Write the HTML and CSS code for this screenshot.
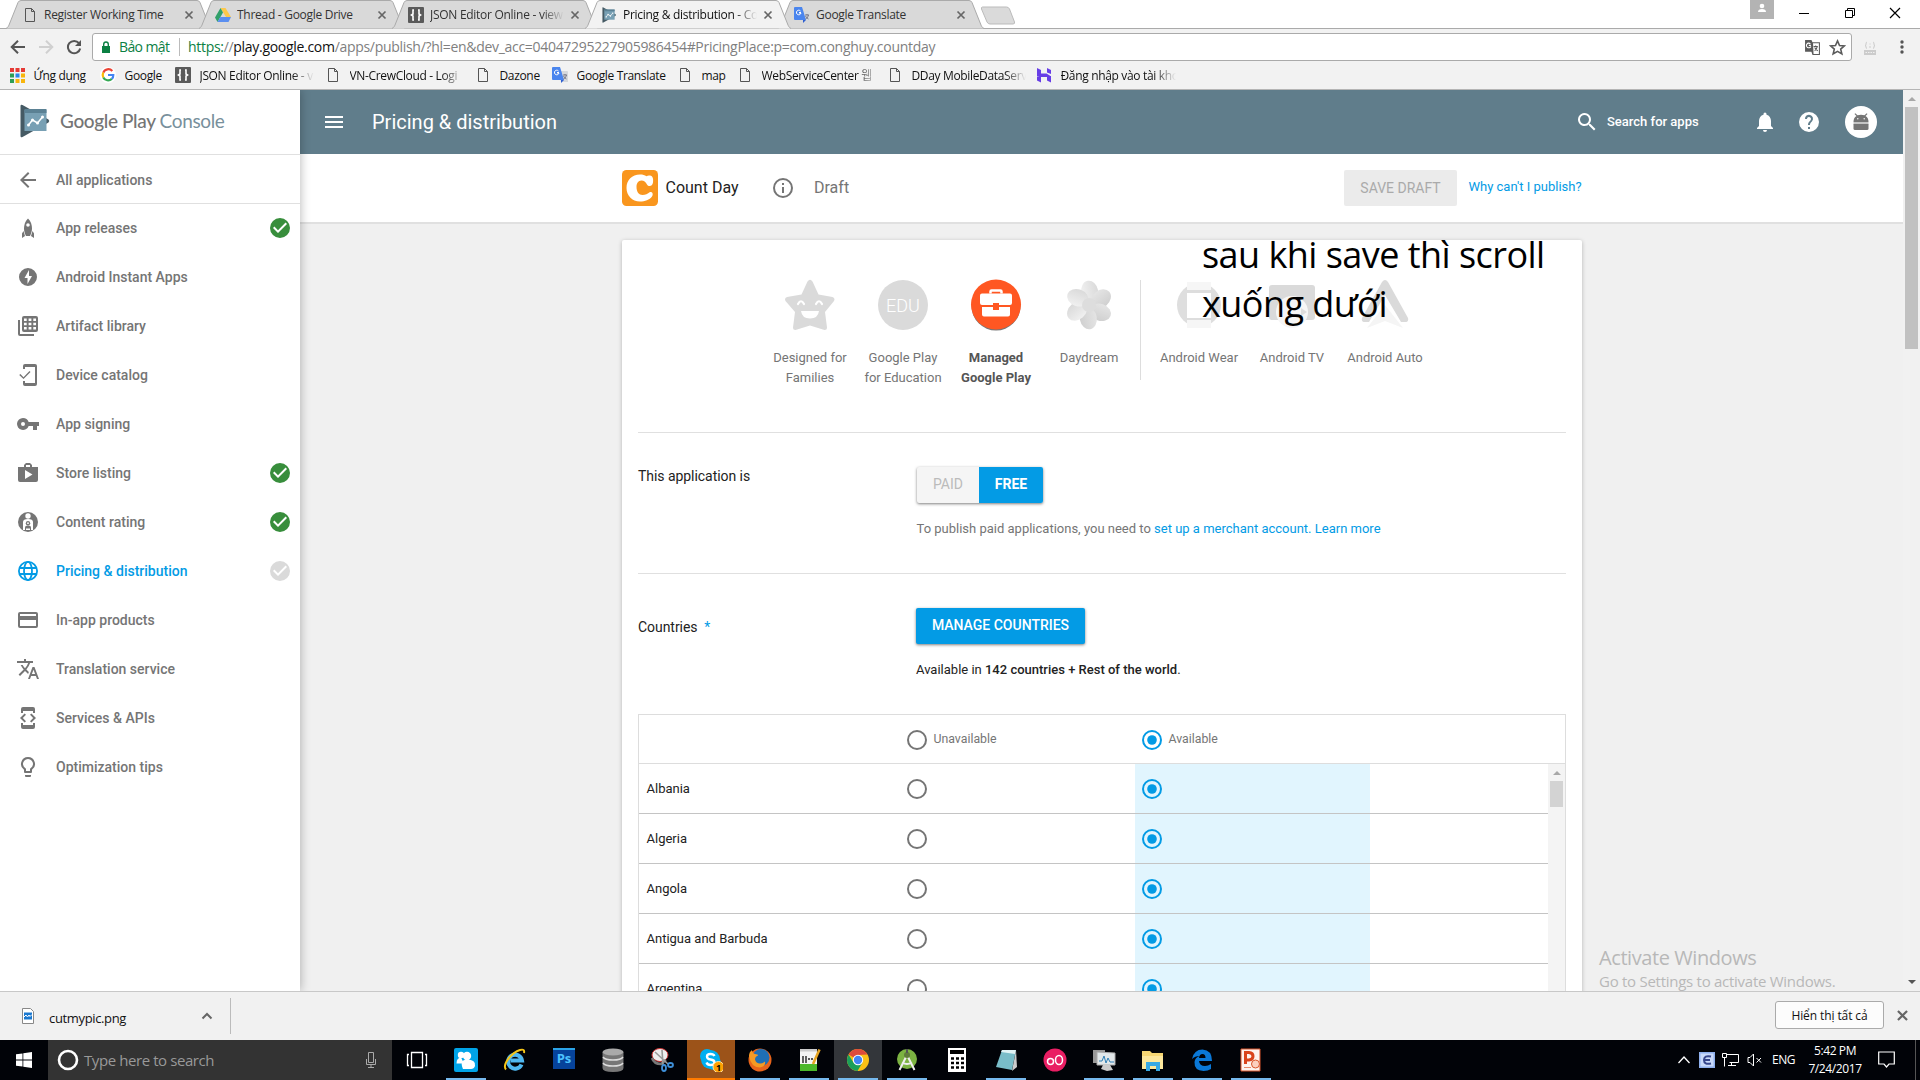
FILE: index.html
```html
<!DOCTYPE html>
<html lang="en">
<head>
<meta charset="utf-8">
<title>Pricing &amp; distribution - Google Play Console</title>
<link rel="stylesheet" href="styles.css">
</head>
<body>
<svg class="defs" aria-hidden="true">
  <symbol id="tab" viewBox="0 0 206 29"><path d="M0 28.5 C2 27.500 2.500 26 3 25 L12 2.500 Q13 .5 15 .5 H191 Q193 .5 194 2.500 L203 25 C203.500 26 204 27.500 206 28.500"/></symbol>
  <symbol id="doc" viewBox="0 0 16 16"><path d="M3.500 1.500h6l3 3v10h-9zM9.500 1.500v3h3" fill="none" stroke="#555"/></symbol>
  <symbol id="x" viewBox="0 0 10 10"><path d="M1.500 1.500l7 7M8.500 1.500l-7 7" stroke="#666" stroke-width="1.700"/></symbol>
  <symbol id="json" viewBox="0 0 16 16"><rect width="16" height="16" rx="1" fill="#5a5a5a"/><path d="M6 3H5v4L3.500 8 5 9v4h1M10 3h1v4l1.500 1L11 9v4h-1" fill="none" stroke="#fff" stroke-width="1.600"/></symbol>
  <symbol id="trans" viewBox="0 0 16 16"><path d="M6 4h9a1 1 0 0 1 1 1v10H9z" fill="#d5d8dc"/><path d="M1 0h7l4 13H1a1 1 0 0 1-1-1V1a1 1 0 0 1 1-1z" fill="#4a85ee"/><path d="M9 13h3l-3 3z" fill="#2f5fd0"/><path d="M7 5.500H5M6.500 4A2.300 2.300 0 1 0 7 6H5" fill="none" stroke="#fff"/><path d="M11 8h4M13 7v1m1.500 0q-.5 3-3 4m0-3q1 2 3 3" fill="none" stroke="#667" stroke-width=".8"/></symbol>
  <symbol id="check" viewBox="0 0 24 24"><path d="M12 2a10 10 0 1 0 0 20 10 10 0 0 0 0-20zm-2 15-5-5 1.410-1.410L10 14.170l7.590-7.590L19 8z"/></symbol>
  <symbol id="off" viewBox="0 0 24 24"><path d="M12 2a10 10 0 1 0 0 20 10 10 0 0 0 0-20zm0 18a8 8 0 1 1 0-16 8 8 0 0 1 0 16z" fill="#757575"/></symbol>
  <symbol id="on" viewBox="0 0 24 24"><path d="M12 2a10 10 0 1 0 0 20 10 10 0 0 0 0-20zm0 18a8 8 0 1 1 0-16 8 8 0 0 1 0 16z" fill="#039be5"/><circle cx="12" cy="12" r="4.800" fill="#039be5"/></symbol>
  <symbol id="play" viewBox="0 0 30 34"><path d="M1 2Q1 0 3 1L29 15.500q1.500 1.500 0 3L3 33q-2 1-2-1z" fill="#455a64"/><path d="M5 6h22v21H5z" fill="#78a0b4"/><path d="M5 5h22v4H5z" fill="#5b8194"/><path d="M9 21l4-5 5 3 5-6" fill="none" stroke="#fff" stroke-width="1.500"/><g fill="#fff"><circle cx="9" cy="21" r="1.500"/><circle cx="13" cy="16" r="1.500"/><circle cx="18" cy="19" r="1.500"/><circle cx="23" cy="13" r="1.500"/></g></symbol>
</svg>

<header class="tabs">
  <div class="tab"><svg class="shape"><use href="#tab"/></svg><div class="in"><svg class="fav"><use href="#doc"/></svg><span class="t">Register Working Time</span><svg class="cl"><use href="#x"/></svg></div></div>
  <div class="tab"><svg class="shape"><use href="#tab"/></svg><div class="in"><svg class="fav" viewBox="0 0 16 16"><path d="M5.500 1h5l5.500 9h-5z" fill="#fdc84b"/><path d="M5.500 1 0 10.500 2.500 15 8 5.500z" fill="#31a06a"/><path d="M5.300 10H16l-2.500 5h-11z" fill="#5b8ff0"/></svg><span class="t">Thread - Google Drive</span><svg class="cl"><use href="#x"/></svg></div></div>
  <div class="tab"><svg class="shape"><use href="#tab"/></svg><div class="in"><svg class="fav"><use href="#json"/></svg><span class="t fade">JSON Editor Online - view</span><svg class="cl"><use href="#x"/></svg></div></div>
  <div class="tab active"><svg class="shape"><use href="#tab"/></svg><div class="in"><svg class="fav"><use href="#play"/></svg><span class="t fade">Pricing &amp; distribution - Co</span><svg class="cl"><use href="#x"/></svg></div></div>
  <div class="tab"><svg class="shape"><use href="#tab"/></svg><div class="in"><svg class="fav"><use href="#trans"/></svg><span class="t">Google Translate</span><svg class="cl"><use href="#x"/></svg></div></div>
  <svg class="newtab" viewBox="0 0 36 19"><path d="M2.500 1h24q2 0 3 2l5 13q.5 2-1.500 2H10q-2 0-3-2L1.500 3q-.5-2 1-2z" fill="#dadada" stroke="#bbb"/></svg>
  <div class="winctl">
    <svg class="user" viewBox="0 0 24 19"><path d="M0 0h24v19H0z" fill="#b3b3b3"/><circle cx="12" cy="6" r="2.300" fill="#fff"/><path d="M8 12q0-3 4-3t4 3z" fill="#fff"/></svg>
    <svg class="wc" viewBox="0 0 12 12"><path d="M1 6.500h10" stroke="#000"/></svg>
    <svg class="wc" viewBox="0 0 12 12"><path d="M1.500 3.500h7v7h-7zM3.500 3.500v-2h7v7h-2" fill="none" stroke="#000"/></svg>
    <svg class="wc" viewBox="0 0 12 12"><path d="M1 1l10 10M11 1 1 11" stroke="#000" stroke-width="1.200"/></svg>
  </div>
</header>

<div class="toolbar">
  <svg class="nav" viewBox="0 0 16 16"><path d="M15 8H2M8 1.700 1.700 8 8 14.300" fill="none" stroke="#555" stroke-width="2"/></svg>
  <svg class="nav" viewBox="0 0 16 16"><path d="M1 8h13M8 1.700 14.300 8 8 14.300" fill="none" stroke="#d0d0d0" stroke-width="2"/></svg>
  <svg class="nav" viewBox="0 0 16 16"><path d="M13 4.200A6.200 6.200 0 1 0 14.200 9.500" fill="none" stroke="#555" stroke-width="2"/><path d="M15 1v6H9z" fill="#555"/></svg>
  <div class="omni">
    <svg class="lock" viewBox="0 0 10 13"><path d="M1 5h8v7H1z" fill="#0b8043"/><path d="M2.700 5V3.300a2.300 2.300 0 0 1 4.600 0V5" fill="none" stroke="#0b8043" stroke-width="1.400"/></svg>
    <span class="secure">Bảo mật</span>
    <span class="url"><i>https:</i>//<b>play.google.com</b>/apps/publish/?hl=en&amp;dev_acc=04047295227905986454#PricingPlace:p=com.conghuy.countday</span>
    <svg class="oi" viewBox="0 0 16 16"><path d="M1 1h6l1 2h7v12H8l-1-3H1z" fill="#5a5a5a"/><path d="M8.500 4H14v10H9z" fill="#fff"/><path d="M6.500 6H4.500M6 4.500A2.200 2.200 0 1 0 6.500 7" fill="none" stroke="#fff"/><path d="M9 7h4M11 6v1m1.500 0q-.5 3-2.500 4m0-3q1 2 3 3" fill="none" stroke="#5a5a5a"/></svg>
    <svg class="oi" viewBox="0 0 16 16"><path d="M8 1.800l1.900 4.300 4.600.4-3.500 3 1.100 4.600L8 11.700l-4.100 2.400L5 9.500l-3.500-3 4.600-.4z" fill="none" stroke="#5a5a5a" stroke-width="1.500"/></svg>
  </div>
  <svg class="ext" viewBox="0 0 14 16"><path d="M1 11h12v5H1z" fill="#ccc"/><path d="M4 3Q3 3 3 5T2 6.500Q3 6.500 3 8t1 1.500M10 3q1 0 1 2t1 1.500Q11 6.500 11 8t-1 1.500M7 4.500v1M7 7v2" fill="none" stroke="#ccc"/><path d="M2.500 13.500h9" stroke="#f1f1f1" stroke-dasharray="1.500 1"/></svg>
  <svg class="dots" viewBox="0 0 4 16"><g fill="#555"><circle cx="2" cy="3" r="1.700"/><circle cx="2" cy="8" r="1.700"/><circle cx="2" cy="13" r="1.700"/></g></svg>
</div>

<nav class="marks">
  <a style="width:91px"><svg viewBox="0 0 16 16"><path d="M1 1h4v4H1zM6.500 1h4v4h-4zM12 1h4v4h-4z" fill="#e53a35"/><path d="M1 6.500h4v4H1z" fill="#2e9e55"/><path d="M6.500 6.500h4v4h-4z" fill="#2c87e8"/><path d="M12 6.500h4v4h-4zM6.500 12h4v4h-4zM12 12h4v4h-4z" fill="#f8b50c"/><path d="M1 12h4v4H1z" fill="#2e9e55"/></svg><span>Ứng dụng</span></a>
  <a style="width:75px"><svg viewBox="0 0 16 16"><circle cx="8" cy="8" r="8" fill="#fff"/><path d="M12.300 4A5.400 5.400 0 0 0 3.300 5.600" fill="none" stroke="#ea4335" stroke-width="2.200"/><path d="M3.300 5.600a5.400 5.400 0 0 0 0 4.800" fill="none" stroke="#fbbc05" stroke-width="2.200"/><path d="M3.300 10.400a5.400 5.400 0 0 0 8.500 1.500" fill="none" stroke="#34a853" stroke-width="2.200"/><path d="M11.800 11.900A5.400 5.400 0 0 0 13.300 8H8" fill="none" stroke="#4285f4" stroke-width="2.200"/></svg><span>Google</span></a>
  <a style="width:150px"><svg><use href="#json"/></svg><span class="fade" style="width:114px">JSON Editor Online - v</span></a>
  <a style="width:150px"><svg><use href="#doc"/></svg><span class="fade" style="width:114px">VN-CrewCloud - Logi</span></a>
  <a style="width:77px"><svg><use href="#doc"/></svg><span>Dazone</span></a>
  <a style="width:125px"><svg><use href="#trans"/></svg><span>Google Translate</span></a>
  <a style="width:60px"><svg><use href="#doc"/></svg><span>map</span></a>
  <a style="width:150px"><svg><use href="#doc"/></svg><span class="fade" style="width:116px">WebServiceCenter 웹</span></a>
  <a style="width:149px"><svg><use href="#doc"/></svg><span class="fade" style="width:114px">DDay MobileDataServ</span></a>
  <a style="width:150px"><svg viewBox="0 0 16 16"><path d="M1 1l4 2v3.500h5.500l4 2.500H1zM11 1l4 2v4l-4-1.500zM15 15.500l-4-2V10H5.500l-4-1H15zM1 9.500h4v6l-4-2z" fill="#673de6"/></svg><span class="fade" style="width:115px">Đăng nhập vào tài kho</span></a>
</nav>

<main class="page">
  <aside class="side">
    <div class="logo"><svg><use href="#play"/></svg><span>Google Play <em>Console</em></span></div>
    <a class="row back"><svg viewBox="0 0 24 24"><path d="M20 11H7.830l5.590-5.590L12 4l-8 8 8 8 1.410-1.410L7.830 13H20z"/></svg><span>All applications</span></a>
    <a class="row"><svg viewBox="0 0 24 24"><path d="M12 2.500C9 5.500 8 9 8 12.500c0 2.800.8 5 2 7.500h4c1.200-2.500 2-4.700 2-7.500 0-3.500-1-7-4-10zm0 4.700a1.800 1.800 0 1 1 0 3.600 1.800 1.800 0 0 1 0-3.600zM7.500 15 6 17.500V22l3-2zM16.500 15l1.500 2.500V22l-3-2z"/></svg><span>App releases</span><svg class="ok"><use href="#check"/></svg></a>
    <a class="row"><svg viewBox="0 0 24 24"><path d="M12 3a9 9 0 1 0 0 18 9 9 0 0 0 0-18zm-.500 16v-6H8.500L13 5v6h3z"/></svg><span>Android Instant Apps</span></a>
    <a class="row"><svg viewBox="0 0 24 24"><path fill-rule="evenodd" d="M8 2h12a2 2 0 0 1 2 2v12a2 2 0 0 1-2 2H8a2 2 0 0 1-2-2V4a2 2 0 0 1 2-2zm0 2.500V7h2.700V4.500zm4.600 0V7h2.800V4.500zm4.700 0V7H20V4.500zM8 8.700v2.600h2.700V8.700zm4.600 0v2.600h2.800V8.700zm4.700 0v2.600H20V8.700zM8 13v2.500h2.700V13zm4.600 0v2.500h2.800V13zm4.700 0v2.500H20V13z"/><path d="M2 6h2v14h14v2H4a2 2 0 0 1-2-2z"/></svg><span>Artifact library</span></a>
    <a class="row"><svg viewBox="0 0 24 24"><path d="M9 1h10a2 2 0 0 1 2 2v18a2 2 0 0 1-2 2H9a2 2 0 0 1-2-2v-3h2v2h10V4H9v2H7V3a2 2 0 0 1 2-2z"/><path d="M4.400 11 7.500 14.200 13.500 8l1 1-7 7-4.300-4z"/></svg><span>Device catalog</span></a>
    <a class="row"><svg viewBox="0 0 24 24"><path d="M12.650 10A5.990 5.990 0 0 0 7 6a6 6 0 1 0 5.650 8H17v4h4v-4h2v-4zM7 14a2 2 0 1 1 0-4 2 2 0 0 1 0 4z"/></svg><span>App signing</span></a>
    <a class="row"><svg viewBox="0 0 24 24"><path d="M16 6V4l-2-2h-4L8 4v2H2v13a2 2 0 0 0 2 2h16a2 2 0 0 0 2-2V6zm-6-2h4v2h-4zM9 18V9l7.500 4.500z"/></svg><span>Store listing</span><svg class="ok"><use href="#check"/></svg></a>
    <a class="row"><svg viewBox="0 0 24 24"><circle cx="12" cy="12" r="10"/><circle cx="12" cy="6" r="2.700" fill="#fff"/><path d="M7 20v-8q0-3 5-3t5 3v8z" fill="#fff"/><circle cx="12" cy="13.200" r="2.200"/><path d="M9 20v-2.500q0-2 3-2t3 2V20z"/><circle cx="12" cy="13.200" r=".9" fill="#fff"/><path d="M10 20h4v-1.500h-4z" fill="#fff"/></svg><span>Content rating</span><svg class="ok"><use href="#check"/></svg></a>
    <a class="row cur"><svg viewBox="0 0 24 24"><g fill="none" stroke="#039be5" stroke-width="1.800"><circle cx="12" cy="12" r="9.100"/><ellipse cx="12" cy="12" rx="4" ry="9.100"/><path d="M3.500 9h17M3.500 15h17"/></g></svg><span>Pricing &amp; distribution</span><svg class="ok no"><use href="#check"/></svg></a>
    <a class="row"><svg viewBox="0 0 24 24"><path d="M20 4H4a2 2 0 0 0-2 2v12a2 2 0 0 0 2 2h16a2 2 0 0 0 2-2V6a2 2 0 0 0-2-2zm0 14H4v-6h16zm0-10H4V6h16z"/></svg><span>In-app products</span></a>
    <a class="row"><svg viewBox="0 0 24 24"><path d="M12.870 15.070l-2.540-2.510.03-.03A17.520 17.520 0 0 0 14.070 6H17V4h-7V2H8v2H1v1.990h11.170C11.500 7.920 10.440 9.750 9 11.350 8.070 10.320 7.300 9.190 6.690 8h-2c.73 1.630 1.730 3.170 2.980 4.560l-5.090 5.020L4 19l5-5 3.110 3.110zM18.500 10h-2L12 22h2l1.120-3h4.750L21 22h2zm-2.620 7l1.620-4.330L19.120 17z"/></svg><span>Translation service</span></a>
    <a class="row"><svg viewBox="0 0 24 24"><path d="M7 5h10v2h2V3a2 2 0 0 0-2-2H7a2 2 0 0 0-2 2v4h2zm8.410 11.590L20 12l-4.590-4.590L14 8.830 17.170 12 14 15.170zM10 15.170 6.830 12 10 8.830 8.590 7.410 4 12l4.590 4.590zM17 19H7v-2H5v4a2 2 0 0 0 2 2h10a2 2 0 0 0 2-2v-4h-2z"/></svg><span>Services &amp; APIs</span></a>
    <a class="row"><svg viewBox="0 0 24 24"><path d="M9 21a1 1 0 0 0 1 1h4a1 1 0 0 0 1-1v-1H9zm3-19a7 7 0 0 0-4 12.740V17a1 1 0 0 0 1 1h6a1 1 0 0 0 1-1v-2.260A7 7 0 0 0 12 2zm2.850 11.100-.85.600V16h-4v-2.300l-.85-.600a5 5 0 1 1 5.700 0z"/></svg><span>Optimization tips</span></a>
  </aside>

  <section class="body">
    <div class="appbar">
      <svg class="ham" viewBox="0 0 24 24"><path d="M3 18h18v-2H3zm0-5h18v-2H3zm0-7v2h18V6z"/></svg>
      <h1>Pricing &amp; distribution</h1>
      <svg class="mag" viewBox="0 0 24 24"><path d="M15.500 14h-.79l-.28-.27A6.500 6.500 0 1 0 13.730 14.430l.27.280v.79l5 4.990L20.490 19zm-6 0a4.500 4.500 0 1 1 0-9 4.500 4.500 0 0 1 0 9z"/></svg>
      <span class="sfa">Search for apps</span>
      <svg class="bell" viewBox="0 0 24 24"><path d="M12 22a2 2 0 0 0 2-2h-4a2 2 0 0 0 2 2zm6-6v-5c0-3.070-1.640-5.640-4.500-6.320V4a1.500 1.500 0 0 0-3 0v.68C7.630 5.360 6 7.920 6 11v5l-2 2v1h16v-1z"/></svg>
      <svg class="help" viewBox="0 0 24 24"><path d="M12 2a10 10 0 1 0 0 20 10 10 0 0 0 0-20zm1 17h-2v-2h2zm2.070-7.750-.9.920C13.450 12.900 13 13.500 13 15h-2v-.5c0-1.100.45-2.100 1.170-2.830l1.240-1.260A2 2 0 1 0 10 9H8a4 4 0 1 1 7.070 2.250z"/></svg>
      <svg class="ava" viewBox="0 0 32 32"><circle cx="16" cy="16" r="16" fill="#fff"/><path d="M8.500 16q0-4.500 3-6L9.500 8l.8-.8 2.200 2q3.500-1 7 0l2.200-2 .8.800-2 2q3 1.500 3 6z" fill="#757575"/><path d="M8.500 16h15v2.500h-15z" fill="#c4c4c4"/><path d="M8.500 18h15v4.500q0 1.500-1.500 1.500H10q-1.500 0-1.500-1.500z" fill="#757575"/><circle cx="12.800" cy="12.800" r=".7" fill="#fff"/><circle cx="19.200" cy="12.800" r=".7" fill="#fff"/></svg>
    </div>
    <div class="sub">
      <svg class="appicon" viewBox="0 0 36 36"><rect width="36" height="36" rx="4.500" fill="#f9961e"/><path d="M28 5.500C31 6 31.500 9 31 12.500 30.500 16.500 26.500 17 25 14.500 23.500 12 22 10.500 19.500 10.500 16 10.500 14.500 13.500 14.500 17 14.500 22 17 25 20.500 25 23.500 25 25.500 24 28 22 30.500 21.500 31.500 24 30 26.500 27.500 30 23 31.500 18 31.500 10 31.500 4.500 25.500 4.500 18 4.500 10 10 4.500 18 4.500 21 4.500 22.500 5 24.500 6.200 25.500 5.500 26.500 5.200 28 5.500z" fill="#fff"/></svg>
      <span class="name">Count Day</span>
      <svg class="info" viewBox="0 0 24 24"><path d="M11 17h2v-6h-2zm1-15a10 10 0 1 0 0 20 10 10 0 0 0 0-20zm0 18a8 8 0 1 1 0-16 8 8 0 0 1 0 16zM11 9h2V7h-2z"/></svg>
      <span class="draft">Draft</span>
      <button class="save">SAVE DRAFT</button>
      <a class="why">Why can't I publish?</a>
    </div>

    <div class="card">
      <div class="progs">
        <div class="p"><svg viewBox="0 0 52 52"><path d="M23.500 2.500q2.500-3.500 5 0l6 13 14 2.500q3 1 1.500 4L41 33l2 15.500q0 2.500-2.500 2.500L26 46.500 11.500 51Q9 51 9 48.500L11 33 1.500 22q-1.500-3 1.500-4l14.500-2.500z" fill="#dadada"/><path d="M14 25q3-5.500 6 0M32 25q3-5.500 6 0" fill="none" stroke="#fff" stroke-width="2.200" stroke-linecap="round"/><path d="M17 32h18q-1 7.500-9 7.500T17 32z" fill="#fff"/></svg><span>Designed for<br>Families</span></div>
        <div class="p"><svg viewBox="0 0 52 52"><circle cx="26" cy="26" r="25" fill="#dadada"/><text x="26" y="32.500" text-anchor="middle" class="edu">EDU</text></svg><span>Google Play<br>for Education</span></div>
        <div class="p sel"><svg viewBox="0 0 52 52"><circle cx="26" cy="27" r="24.500" fill="#777"/><circle cx="26" cy="25.500" r="25" fill="#ff5722"/><path d="M20.500 14.500v-2q0-1 1-1h9q1 0 1 1v2" fill="none" stroke="#fff" stroke-width="2.500"/><path d="M12 14.500h28q2 0 2 2V24q0 2-2 2H12q-2 0-2-2v-7.500q0-2 2-2zM12 28h28v7.500q0 2-2 2H14q-2 0-2-2z" fill="#fff"/><path d="M23 24h6v7h-6z" fill="#ff5722"/></svg><span>Managed<br>Google Play</span></div>
        <div class="p"><svg viewBox="0 0 52 52"><defs><linearGradient id="pl"><stop offset="0" stop-color="#f0f0f0"/><stop offset="1" stop-color="#dadada"/></linearGradient><linearGradient id="pd"><stop offset="0" stop-color="#e4e4e4"/><stop offset="1" stop-color="#d0d0d0"/></linearGradient></defs><g transform="translate(26 26)"><ellipse cx="3" cy="-13" rx="8.500" ry="11" transform="rotate(-10)" fill="url(#pl)"/><ellipse cx="3" cy="-13" rx="8.500" ry="11" transform="rotate(50)" fill="url(#pd)"/><ellipse cx="3" cy="-13" rx="8.500" ry="11" transform="rotate(110)" fill="url(#pd)"/><ellipse cx="3" cy="-13" rx="8.500" ry="11" transform="rotate(170)" fill="url(#pd)"/><ellipse cx="3" cy="-13" rx="8.500" ry="11" transform="rotate(230)" fill="url(#pl)"/><ellipse cx="3" cy="-13" rx="8.500" ry="11" transform="rotate(290)" fill="url(#pl)"/><circle r="7" fill="#ddd"/></g></svg><span>Daydream</span></div>
        <i class="vr"></i>
        <div class="p"><svg viewBox="0 0 52 52"><circle cx="26" cy="26" r="22" fill="#dedede"/><path d="M14 3h24v46H14z" fill="#f6f6f6"/><path d="M14 11h24v3H14zM14 39h24v2H14z" fill="#ddd"/><path d="M14 14h24v25H14z" fill="#fff"/></svg><span>Android Wear</span></div>
        <div class="p"><svg viewBox="0 0 52 52"><rect x="3" y="6" width="46" height="35" rx="3" fill="#dadada"/><circle cx="26" cy="33" r="16" fill="#f6f6f6"/><path d="M35 29l6 4-6 4z" fill="#ddd"/></svg><span>Android TV</span></div>
        <div class="p"><svg viewBox="0 0 52 52"><path d="M26 26 8 49l18-7 18 7z" fill="#f5f5f5"/><path d="M23 3q3-4 6 0l20 36q1 4-3 4h-4L26 16 10 43H6q-4 0-3-4z" fill="#dadada"/></svg><span>Android Auto</span></div>
      </div>

      <div class="sec s1">
        <label>This application is</label>
        <div>
          <div class="toggle"><span>PAID</span><b>FREE</b></div>
          <p class="hint">To publish paid applications, you need to <a>set up a merchant account.</a> <a>Learn more</a></p>
        </div>
      </div>
      <div class="sec s2">
        <label>Countries &nbsp;<a>*</a></label>
        <div>
          <button class="manage">MANAGE COUNTRIES</button>
          <p class="avail">Available in <b>142 countries + Rest of the world</b>.</p>
        </div>
      </div>

      <div class="table">
        <div class="tr th"><span></span><span class="o"><svg><use href="#off"/></svg>Unavailable</span><span class="o"><svg><use href="#on"/></svg>Available</span></div>
        <div class="scroll">
          <div class="rows">
            <div class="tr"><span>Albania</span><span class="o"><svg><use href="#off"/></svg></span><span class="o hl"><svg><use href="#on"/></svg></span></div>
            <div class="tr"><span>Algeria</span><span class="o"><svg><use href="#off"/></svg></span><span class="o hl"><svg><use href="#on"/></svg></span></div>
            <div class="tr"><span>Angola</span><span class="o"><svg><use href="#off"/></svg></span><span class="o hl"><svg><use href="#on"/></svg></span></div>
            <div class="tr"><span>Antigua and Barbuda</span><span class="o"><svg><use href="#off"/></svg></span><span class="o hl"><svg><use href="#on"/></svg></span></div>
            <div class="tr"><span>Argentina</span><span class="o"><svg><use href="#off"/></svg></span><span class="o hl"><svg><use href="#on"/></svg></span></div>
          </div>
          <div class="tsb"><i class="up"></i><i class="thumb"></i></div>
        </div>
      </div>
    </div>
  </section>
  <div class="vsb"><i class="up"></i><i class="thumb"></i><i class="down"></i></div>
</main>

<footer class="shelf">
  <svg class="file" viewBox="0 0 12 16"><path d="M.5.500h8l3 3v12H.500z" fill="#fff" stroke="#888"/><path d="M2 4.500h8v7H2z" fill="#1a78d0"/><path d="M2 9l2-2 1.500 2L7 7l1 1.500 2-2" fill="none" stroke="#fff"/></svg>
  <span class="fname">cutmypic.png</span>
  <svg class="chev" viewBox="0 0 12 8"><path d="M1.500 6.500 6 2l4.500 4.500" fill="none" stroke="#666" stroke-width="2"/></svg>
  <i class="sep"></i>
  <button class="all">Hiển thị tất cả</button>
  <svg class="sx"><use href="#x"/></svg>
</footer>

<footer class="task">
  <svg class="start" viewBox="0 0 16 16"><path d="M0 2.300 6.500 1.400v6.200H0zM7.300 1.300 16 0v7.600H7.300zM0 8.400h6.500v6.200L0 13.700zM7.300 8.400H16V16l-8.700-1.300z" fill="#fff"/></svg>
  <div class="find"><svg class="cort" viewBox="0 0 22 22"><circle cx="11" cy="11" r="9" fill="none" stroke="#fff" stroke-width="2.600"/></svg><span>Type here to search</span><svg class="mic" viewBox="0 0 12 18"><path d="M3.500 1.500h5v10h-5zM1.500 8v5.500h9V8M6 13.500v3M3 16.500h6" fill="none" stroke="#aaa"/></svg></div>
  <div class="apps">
    <div><svg viewBox="0 0 24 24"><path d="M6.500 4.500h11v15h-11zM4 6.500H2.500v11H4M20 6.500h1.500v11H20" fill="none" stroke="#fff" stroke-width="1.300"/></svg></div>
    <div class="run"><svg viewBox="0 0 24 24"><rect width="24" height="24" rx="2" fill="#00a4e8"/><g fill="#fff"><circle cx="7" cy="7" r="3.200"/><path d="M2.500 15.500Q2.500 10 7 9.500l3 6z"/><circle cx="13" cy="8" r="4.200"/><path d="M9 21q-4-9 4-9.500 9 0 8 6.500-1 3-4 3z"/></g></svg></div>
    <div><svg viewBox="0 0 24 24"><path d="M18.500 16.500A7 7 0 1 1 19 12.500H7.500" fill="none" stroke="#4fb8f0" stroke-width="4"/><path d="M3 21.500C-1 17 8 5 17 2q5-1.500 4 3" fill="none" stroke="#f5c518" stroke-width="2"/></svg></div>
    <div><svg viewBox="0 0 24 24"><path d="M1 1h22v20H1z" fill="#06439b"/><path d="M1 0h22v2H1z" fill="#2ba3e8"/><text x="12" y="15" text-anchor="middle" class="ps">Ps</text></svg></div>
    <div><svg viewBox="0 0 24 24"><g fill="#777"><path d="M1.500 4v16q0 4 10.500 4t10.500-4V4z"/></g><g fill="none" stroke="#ddd" stroke-width="1.500"><path d="M2 9q2 3 10 3t10-3M2 15q2 3 10 3t10-3"/></g><ellipse cx="12" cy="4" rx="10.500" ry="3.500" fill="#aaa"/></svg></div>
    <div><svg viewBox="0 0 24 24"><ellipse cx="10" cy="7" rx="8" ry="6.500" fill="#eee" stroke="#c33"/><path d="M2 10q2 6 9 6l5-4" fill="none" stroke="#777" stroke-width="2.500"/><path d="M5 4l13 12M12 2l1 15" stroke="#999" stroke-width="1.600"/><g fill="none" stroke="#3e8fd8" stroke-width="1.800"><ellipse cx="14" cy="20" rx="2" ry="3"/><ellipse cx="20.500" cy="17" rx="2.500" ry="2"/></g></svg></div>
    <div class="skype"><svg viewBox="0 0 24 24"><circle cx="8" cy="8" r="7" fill="#00aff0"/><circle cx="15" cy="15" r="7" fill="#00aff0"/><circle cx="11.500" cy="11.500" r="9.500" fill="#00aff0"/><path d="M15.500 8q-1-2-4-2-3.500 0-3.500 2.500t3.500 3q4 .5 4 3t-4 2.500q-3 0-4-2.500" fill="none" stroke="#fff" stroke-width="2.400"/><circle cx="19.500" cy="19" r="5.500" fill="#ffa000" stroke="#ffe0a0"/><text x="19.500" y="22.500" text-anchor="middle" class="one">1</text></svg></div>
    <div class="run"><svg viewBox="0 0 24 24"><circle cx="12" cy="12" r="11.500" fill="#e8641b"/><circle cx="13" cy="9.500" r="8.500" fill="#1f6fb5"/><path d="M1 8q0-4 3-6 0 3 3 4 3 0 3 1.500-3 1-3 4 1 4 5 4 3 0 5-2 1 5-5 6-9 0-11-11.500z" fill="#f59a23"/></svg></div>
    <div class="run"><svg viewBox="0 0 24 24"><path d="M3 1h17v22H3z" fill="#f4f4f4"/><path d="M3 16h17v7H3z" fill="#4cb82b"/><path d="M3 1h17v2.500H3z" fill="#ccc"/><path d="M6 8v7M9 8v7M11 11h2M14 11h2" stroke="#222" stroke-width="1.400"/><path d="M22.500 1.500 16 16" stroke="#e6a423" stroke-width="2.600"/></svg></div>
    <div class="run chrome"><svg viewBox="0 0 24 24"><circle cx="12" cy="12" r="11" fill="#fbc116"/><path d="M12 12 2.470 6.500A11 11 0 0 1 21.500 6.500L12 7z" fill="#de4b3b"/><path d="M12 12 16.500 14.500 11.500 23A11 11 0 0 1 2.470 6.500L7.500 14.500z" fill="#1a9f5a"/><circle cx="12" cy="12" r="5.200" fill="#fff"/><circle cx="12" cy="12" r="4.200" fill="#4285f4"/></svg></div>
    <div class="run"><svg viewBox="0 0 24 24"><circle cx="12" cy="11" r="10" fill="#7cb342"/><path d="M12 7 4.500 22M12 7l7.500 15M7 14.500q5 3 10 0" fill="none" stroke="#eee" stroke-width="2"/><circle cx="12" cy="7" r="3" fill="#607d3b"/><path d="M12 1v4" stroke="#555" stroke-width="2"/></svg></div>
    <div><svg viewBox="0 0 24 24"><path d="M3 0h18v24H3z" fill="#fff"/><path d="M5 2h14v4H5z" fill="#000"/><path d="M6 10.500h14M6 15h14M6 19.500h14" stroke="#000" stroke-width="2.500" stroke-dasharray="3 2"/></svg></div>
    <div class="run"><svg viewBox="0 0 24 24"><path d="M8 2h14l-4 20-16-3z" fill="#79bdc9"/><path d="M8 2h14l-1 4-14-2z" fill="#e0f3f5"/><path d="M22 2l1 17-5 4z" fill="#ccc"/></svg></div>
    <div><svg viewBox="0 0 24 24"><circle cx="12" cy="12" r="11.500" fill="#e91e63"/><g fill="none" stroke="#fff" stroke-width="1.500"><circle cx="7.500" cy="13.500" r="3"/><ellipse cx="16" cy="12" rx="3.500" ry="4.500"/></g></svg></div>
    <div class="run"><svg viewBox="0 0 24 24"><path d="M1 2h12v13H1z" fill="#999"/><path d="M5 4l18 1v12H5z" fill="#e2e8ea" stroke="#aaa"/><path d="M7 13h3l2-5 2 7 2-5 2 4h4" fill="none" stroke="#2f7fb5"/><path d="M11 17h7l3 5-6 1-6-2z" fill="#ccc"/></svg></div>
    <div class="run"><svg viewBox="0 0 24 24"><path d="M1 3h8l2 2h11v16H1z" fill="#f7d774"/><path d="M1 8h21v13H1z" fill="#fde79c"/><path d="M5 23v-9h14v9h-4v-5H9v5z" fill="#38a9e4"/></svg></div>
    <div class="run"><svg viewBox="0 0 24 24"><path d="M2 11Q4 1.500 12.500 1.500 22 2 22 13H9q.5 5 6 5 3 0 6-2v5q-3 2-7.500 2Q4 22.500 4.500 14 5 9.500 9.500 8 5 8 2 11zm7-1h6.500q0-4-3-4T9 10z" fill="#0a78d7"/></svg></div>
    <div class="run"><svg viewBox="0 0 24 24"><path d="M2 1h19v22H2z" fill="#fdf3ee" stroke="#d9552b"/><path d="M6.500 16V4.500h3.500q4 .3 4 3.700t-4 3.700H7" fill="none" stroke="#d9441c" stroke-width="3"/><circle cx="16.500" cy="16" r="4" fill="#fbd0bf" stroke="#d9552b"/><path d="M5 19.500h7" stroke="#e88a6a"/></svg></div>
  </div>
  <div class="tray">
    <svg style="width:14px" viewBox="0 0 14 16"><path d="M1.500 11 7 5l5.500 6" fill="none" stroke="#fff" stroke-width="1.300"/></svg>
    <svg style="width:16px" viewBox="0 0 16 16"><path d="M0 0h16v16H0z" fill="#8fb0ee"/><path d="M1.500 1.500h13v13h-13z" fill="#c9dafa"/><path d="M12 4.500Q5 3 5 8t7 3.500M5 8h6" fill="none" stroke="#36468c" stroke-width="2"/></svg>
    <svg style="width:17px" viewBox="0 0 17 16"><path d="M4.500 2.500h12v8h-9M9.500 10.500v3M6 13.500h8M.5 1.500h4v4h-4zM2.500 5.500v9" fill="none" stroke="#fff"/></svg>
    <svg style="width:16px" viewBox="0 0 16 16"><path d="M1 5.500h2L6.500 2v12L3 10.500H1zM9.500 6l4.500 4.500M14 6l-4.500 4.500" fill="none" stroke="#fff"/></svg>
    <span class="eng">ENG</span>
    <span class="clock">5:42 PM<br>7/24/2017</span>
    <svg class="note" viewBox="0 0 17 18"><path d="M.7 1h15.600v12H11l-2.500 3L6 13H.700z" fill="none" stroke="#fff" stroke-width="1.200"/></svg>
  </div>
</footer>

<div class="annot">sau khi save thì scroll<br><span>xuống dưới</span></div>
<div class="wm"><b>Activate Windows</b><span>Go to Settings to activate Windows.</span></div>
</body>
</html>
```
FILE: styles.css
```css
* { box-sizing: border-box; }
body { margin: 0; width: 1920px; height: 1080px; overflow: hidden; display: flex; flex-direction: column; font-family: "Open Sans", "Noto Sans", "Noto Sans CJK KR", sans-serif; font-size: 12px; color: #222; background: #fff; }
svg { display: block; flex: none; }
i, em { font-style: normal; }
h1, p { margin: 0; font-weight: 400; }
button { border: 0; padding: 0; font: inherit; }
.defs { position: absolute; width: 0; height: 0; }
.fade { -webkit-mask-image: linear-gradient(90deg, #000 calc(100% - 22px), transparent); mask-image: linear-gradient(90deg, #000 calc(100% - 22px), transparent); }

/* browser tabs */
.tabs { height: 29px; flex: none; display: flex; padding-left: 6px; border-bottom: 1px solid #aaa; }
.tab { display: grid; width: 206px; height: 29px; margin-right: -13px; flex: none; color: #333; }
.tab > * { grid-area: 1 / 1; }
.shape { width: 206px; height: 29px; fill: #d9d9d9; stroke: #aaa; }
.active { z-index: 1; color: #111; }
.active .shape { fill: #f2f2f2; }
.in { display: flex; align-items: center; padding: 0 18px 4px 16px; height: 29px; }
.fav { width: 16px; height: 16px; margin-top: 5px; }
.t { width: 138px; margin: 4px 2px 0 6px; white-space: nowrap; overflow: hidden; letter-spacing: -.28px; }
.t.fade { width: 134px; margin-right: 6px; }
.cl { width: 10px; height: 10px; margin-top: 5px; }
.newtab { width: 36px; height: 19px; margin: 6px 0 0 9px; }
.winctl { display: flex; margin-left: auto; padding-right: 19px; }
.user { width: 24px; height: 19px; margin-right: 24px; }
.wc { width: 12px; height: 12px; margin: 7px 0 0 0; }
.wc + .wc { margin-left: 33.500px; }

.toolbar { height: 33px; flex: none; display: flex; align-items: center; background: #f2f2f2; padding: 3px 16px 0 10px; }
.nav { width: 16px; height: 16px; margin-right: 12px; }
.nav:nth-child(3) { margin-right: 10px; }
.omni { width: 1760px; height: 28px; border: 1px solid #aaa; border-radius: 3px; background: #fff; display: flex; align-items: center; padding: 0 5px 0 8px; font-size: 14px; }
.lock { width: 10px; height: 13px; margin-right: 8px; }
.secure { color: #0b8043; width: 61px; height: 18px; line-height: 18px; border-right: 1px solid #bbb; letter-spacing: -.6px; margin-right: 8px; }
.url { color: #808080; flex: 1; line-height: 20px; letter-spacing: -.3px; white-space: nowrap; }
.url i { color: #0b8043; }
.url b { color: #111; font-weight: 400; }
.oi { width: 17px; height: 17px; margin-left: 8px; }
.ext { width: 14px; height: 16px; margin-left: 11px; }
.dots { width: 4px; height: 16px; margin-left: 23px; }

.marks { height: 28px; flex: none; display: flex; background: #f2f2f2; border-bottom: 1px solid #b5b5b5; padding-left: 9px; }
.marks a { display: flex; align-items: center; flex: none; height: 26px; }
.marks svg { width: 16px; height: 16px; margin-right: 9px; }
.marks span { white-space: nowrap; overflow: hidden; color: #111; letter-spacing: -.34px; margin-left: -.5px; }

/* page */
.page { height: 901px; flex: none; display: flex; font-family: Roboto, sans-serif; background: #f0f0f0; overflow: hidden; }
.side { width: 300px; flex: none; background: #fff; box-shadow: 0 0 10px rgba(0,0,0,.3); z-index: 1; }
.logo { height: 65px; display: flex; align-items: center; padding: 0 0 3px 19px; border-bottom: 1px solid #e0e0e0; font: 500 19px Lato, sans-serif; color: #757575; letter-spacing: -.37px; }
.logo svg { width: 31px; height: 34px; margin-right: 10px; }
.logo em { color: #78909c; font-weight: 400; }
.row { height: 49px; display: flex; align-items: center; padding: 0 8px 0 16px; font-size: 14px; font-weight: 500; color: #757575; }
.row svg { width: 24px; height: 24px; fill: #757575; margin-right: 16px; }
.row .ok { margin: 0 0 0 auto; fill: #388e3c; }
.row .no { fill: #dadada; }
.back { border-bottom: 1px solid #e0e0e0; padding-top: 1px; }
.back + .row { margin-top: -1px; }
.cur { color: #039be5; }

.body { width: 1603px; flex: none; }
.appbar { height: 64px; background: #607d8b; display: flex; align-items: center; padding-left: 22px; color: #fff; fill: #fff; }
.appbar svg { width: 24px; height: 24px; }
h1 { font-size: 20px; margin-left: 26px; width: 1203px; }
.sfa { font-size: 13px; font-weight: 500; margin: -1px 0 0 8px; width: 146px; }
.appbar .help { margin-left: 20px; }
.appbar .ava { width: 32px; height: 32px; margin-left: 24px; }
.sub { height: 70px; background: #fff; border-bottom: 2px solid #e0e0e0; display: flex; align-items: center; padding-left: 322px; fill: #757575; color: #757575; font-size: 16px; }
.appicon { width: 36px; height: 36px; }
.name { color: #222; margin: -2px 0 0 7.500px; width: 105px; }
.info { width: 24px; height: 24px; }
.draft { margin: -2px 0 0 19.500px; width: 530px; }
.save { width: 113px; height: 36px; background: #ebebeb; color: #aaa; border-radius: 2px; font-size: 14px; font-weight: 400; padding-bottom: 1px; }
.why { font-size: 13px; color: #039be5; margin: -3px 0 0 11.500px; }

.card { width: 960px; height: 900px; margin: 16px 0 0 322px; padding: 40px 16px 0; background: #fff; border-radius: 2px; box-shadow: 0 1px 4px rgba(0,0,0,.25); color: #222; }
.progs { height: 153px; display: flex; margin: 0 -16px; padding-left: 141.500px; border: 0; }
.p { width: 93px; text-align: center; font-size: 13px; line-height: 20px; color: #757575; white-space: nowrap; }
.p svg { width: 52px; height: 52px; margin: -1px auto 17px; }
.sel { font-weight: 700; color: #555; }
.edu { font: 300 18px Roboto, sans-serif; fill: #fff; }
.ps { font: 700 13px "Open Sans", sans-serif; fill: #4cc4ff; }
.one { font: 700 9px "Open Sans", sans-serif; fill: #000; }
.vr { width: 1px; height: 100px; background: #ddd; margin: 0 12px 0 4px; }
.sec { display: flex; border-top: 1px solid #e0e0e0; margin-top: -1px; font-size: 13px; }
.sec label { width: 278px; font-size: 14px; letter-spacing: -.05px; }
.sec a { color: #039be5; }
.s1 { height: 141px; padding-top: 34px; }
.s1 label { line-height: 18px; }
.toggle { width: 126px; height: 36px; margin-left: 1px; display: flex; border-radius: 2px; box-shadow: 0 1px 3px rgba(0,0,0,.5); background: #f5f5f5; overflow: hidden; font-size: 14px; line-height: 35px; text-align: center; }
.toggle span { width: 62px; color: #bbb; }
.toggle b { flex: 1; background: #039be5; color: #fff; font-weight: 700; }
.hint { color: #757575; line-height: 20px; margin: 16px 0 0 .5px; }
.s2 { height: 142px; padding-top: 34px; margin-top: 0; }
.s2 label { padding-top: 10px; line-height: 18px; }
.manage { width: 169px; height: 36px; display: block; background: #039be5; color: #fff; font-size: 14px; font-weight: 500; border-radius: 2px; box-shadow: 0 1px 3px rgba(0,0,0,.5); padding-bottom: 2px; }
.avail { line-height: 20px; margin-top: 16px; }
.avail b { font-weight: 500; }
.table { border: 1px solid #ddd; height: 300px; font-size: 13px; margin-top: -1px; }
.tr { display: grid; grid-template-columns: 261px 235px 235px; height: 50px; border-bottom: 1px solid #c4c4c4; }
.tr span { display: flex; align-items: center; padding-left: 7.500px; }
.tr .o { color: #757575; padding-left: 5px; }
.o svg { width: 24px; height: 24px; margin-right: 4.500px; }
.th { height: 49px; border-color: #ddd; font-size: 12.300px; }
.th svg { margin-top: 2px; }
.hl { background: #e1f5fe; }
.scroll { display: flex; }
.rows { flex: 1; }
.tsb { width: 17px; background: #f4f4f4; padding: 7px 2px; }
.vsb { width: 17px; background: #f1f1f1; padding: 7px 2px 7px; display: flex; flex-direction: column; align-items: center; }
.up, .down { display: block; width: 0; height: 0; margin: 0 auto; border: 4px solid transparent; }
.up { border-top: 0; border-bottom: 4px solid #a8a8a8; }
.down { border-bottom: 0; border-top: 4px solid #555; margin-top: auto; }
.thumb { display: block; width: 13px; background: #c1c1c1; }
.tsb .thumb { height: 26px; background: #d3d3d3; margin-top: 6px; }
.vsb .thumb { height: 242px; margin-top: 6px; }

/* downloads */
.shelf { height: 49px; flex: none; background: #f1f1f1; border-top: 1px solid #c8c8c8; display: flex; align-items: center; padding-left: 22px; }
.file { width: 12px; height: 16px; margin-top: -1px; }
.fname { font-size: 13px; margin: 4px 0 0 15px; width: 152px; letter-spacing: -.35px; color: #111; }
.chev { width: 12px; height: 8px; }
.sep { width: 1px; height: 36px; background: #bbb; margin-left: 17px; }
.all { width: 109px; height: 28px; margin: -2px 0 0 1544px; border: 1px solid #aaa; border-radius: 3px; background: #fcfcfc; font-size: 12px; letter-spacing: -.1px; color: #111; }
.sx { width: 13px; height: 13px; margin: -2px 0 0 11.500px; }

/* taskbar */
.task { height: 40px; flex: none; background: #010308; display: flex; align-items: center; color: #fff; }
.start { width: 16px; height: 16px; margin: 0 16px; }
.find { width: 344px; height: 40px; background: #333; display: flex; align-items: center; padding-left: 9px; color: #999; font-size: 15px; }
.cort { width: 22px; height: 22px; margin-right: 5px; }
.find span { width: 281px; letter-spacing: -.42px; }
.mic { width: 12px; height: 18px; }
.apps { display: flex; padding-left: 1px; }
.apps div { width: 48px; height: 40px; margin-right: 1.060px; display: flex; align-items: center; justify-content: center; }
.apps svg { width: 24px; height: 24px; }
.apps .run { background: linear-gradient(#76b9ed, #76b9ed) center bottom / 40px 2px no-repeat; }
.apps .chrome { background-color: #33363a; }
.apps .skype { background: #9c5319; border-bottom: 2px solid #ff7b00; padding-top: 2px; }
.tray { display: flex; align-items: center; margin-left: auto; padding-right: 3px; border-right: 1px solid #555; margin-right: 4px; height: 40px; font-size: 12px; }
.tray svg { height: 16px; margin-right: 8px; }
.tray svg + svg { margin-right: 7.500px; }
.eng { width: 28px; margin: -2px 0 0 2px; letter-spacing: -.5px; }
.clock { width: 70px; text-align: center; line-height: 18px; letter-spacing: -.4px; }
.tray .note { width: 17px; height: 18px; margin: 0 17px 0 8px; }

/* drawn over the window */
.annot { position: absolute; left: 1202px; top: 230px; z-index: 3; font-size: 36px; line-height: 49px; color: #000; letter-spacing: -.54px; white-space: nowrap; }
.wm { position: absolute; left: 1599px; top: 944px; color: #b8b8b8; display: flex; flex-direction: column; white-space: nowrap; }
.wm b { font-weight: 400; font-size: 20px; line-height: 28px; letter-spacing: -.42px; }
.wm span { font-size: 15px; line-height: 18px; letter-spacing: -.27px; }
```
